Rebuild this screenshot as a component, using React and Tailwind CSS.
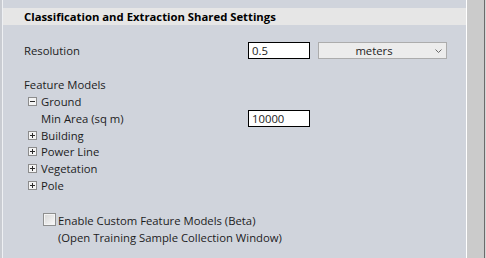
import React from "react";

function TreeBox({ open }) {
  return (
    <svg width="9" height="9" viewBox="0 0 9 9" className="shrink-0">
      <rect x="0.5" y="0.5" width="8" height="8" fill="#f4f4f4" stroke="#8c8c8c" />
      <line x1="2" y1="4.5" x2="7" y2="4.5" stroke="#2b2b2b" />
      {!open && <line x1="4.5" y1="2" x2="4.5" y2="7" stroke="#2b2b2b" />}
    </svg>
  );
}

function TreeRow({ label, open, h = "h-[17px]" }) {
  return (
    <div className={`${h} flex items-center pl-[25px]`}>
      <TreeBox open={open} />
      <span className="ml-[4px] pt-[2px]">{label}</span>
    </div>
  );
}

function TextBox({ value }) {
  return (
    <div className="w-[62px] h-[17px] border border-black bg-white flex items-center pl-[3px] pt-[1px] leading-none">
      {value}
    </div>
  );
}

export default function App() {
  return (
    <div className="w-[486px] h-[258px] flex overflow-hidden bg-[#d0d4dc] text-[11.3px] text-[#1c1c1c] font-['Open_Sans',sans-serif]">
      <div className="w-[2px] bg-[#c9ccd2]" />
      <div className="w-[1px] bg-[#eef0f3]" />

      <div className="w-[463px] flex flex-col">
        <div className="mt-[8px] h-[17px] bg-[#e6e6e6] flex items-center pl-[21px] pt-[1px] font-bold text-black">
          Classification and Extraction Shared Settings
        </div>

        <div className="mt-[17px] h-[17px] flex items-center pl-[21px]">
          <span className="w-[224px] pt-[2px]">Resolution</span>
          <TextBox value="0.5" />
          <div className="relative ml-[8px] w-[129px] h-[17px] border border-[#acacac] bg-[#ececec] flex items-center justify-center pr-[17px] pt-[1px] leading-none">
            meters
            <svg width="7" height="4" viewBox="0 0 7 4" className="absolute right-[4px] top-[6px]">
              <path d="M0.5 0.5 L3.5 3.5 L6.5 0.5" fill="none" stroke="#6a6a6a" />
            </svg>
          </div>
        </div>

        <div className="mt-[17px] h-[17px] flex items-center pl-[21px] pt-[2px]">Feature Models</div>
        <TreeRow label="Ground" open />
        <div className="h-[17px] flex items-center pl-[38px]">
          <span className="w-[207px] pt-[2px]">Min Area (sq m)</span>
          <TextBox value="10000" />
        </div>
        <TreeRow label="Building" h="h-[16px]" />
        <TreeRow label="Power Line" />
        <TreeRow label="Vegetation" />
        <TreeRow label="Pole" h="h-[16px]" />

        <div className="mt-[18px] flex items-start pl-[40px]">
          <div className="mt-[2px] w-[13px] h-[13px] border border-[#8e8f8f] bg-[#f4f4f4] p-[1px] shrink-0">
            <div className="w-full h-full bg-gradient-to-br from-[#d9d9d9] to-[#f7f7f7]" />
          </div>
          <div className="ml-[2px] pt-[1px] leading-[17px]">
            <div>Enable Custom Feature Models (Beta)</div>
            <div>(Open Training Sample Collection Window)</div>
          </div>
        </div>
      </div>

      <div className="w-[1px] bg-white" />
      <div className="w-[17px] bg-[#cbcbcb]" />
      <div className="w-[1px] bg-[#6b6b6b]" />
      <div className="w-[1px] bg-[#d6d6d6]" />
    </div>
  );
}
